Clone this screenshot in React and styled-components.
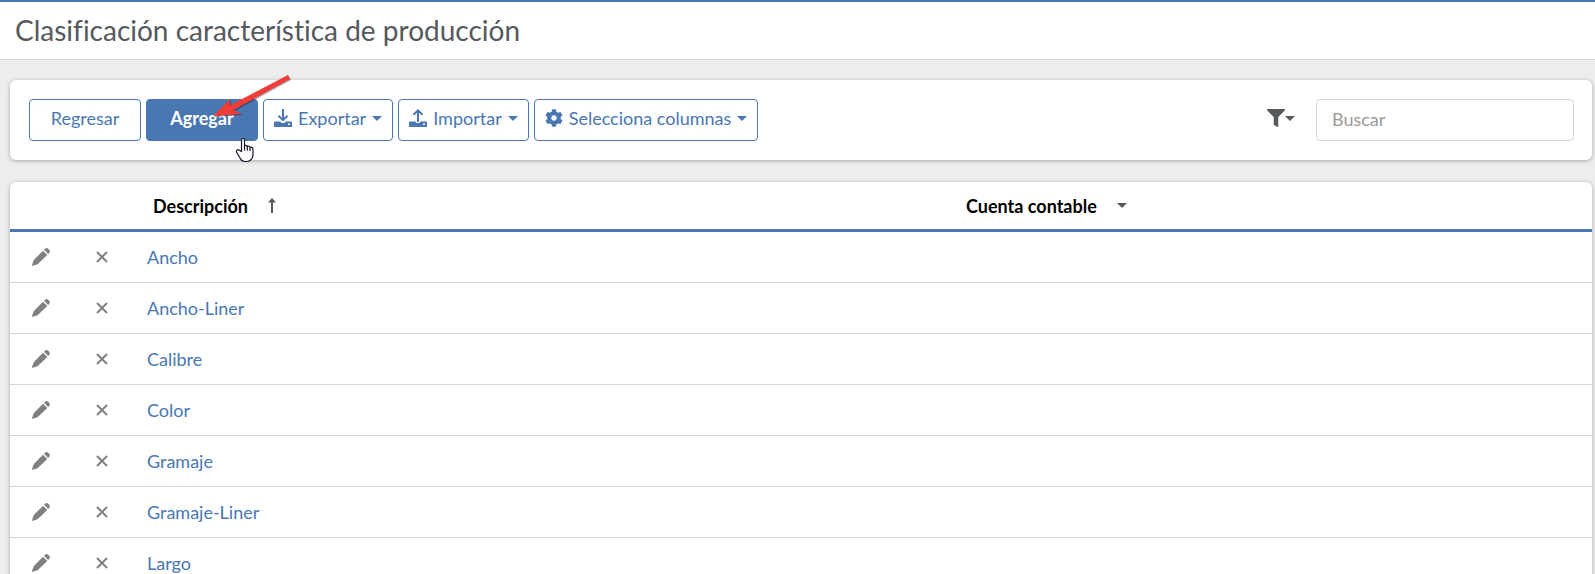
import React from 'react'
import styled, { createGlobalStyle } from 'styled-components'
import { FaCog, FaFilter } from 'react-icons/fa'

const GlobalStyle = createGlobalStyle`
* {
  box-sizing: border-box;
}
body {
  margin: 0;
  background: #ededed;
  font-family: "Trebuchet MS", Lato, "Open Sans", sans-serif;
  font-size: 18px;
  font-variant-ligatures: none;
  color: #55595c;
}
button, input {
  font-family: inherit;
  font-size: 18px;
}
`

const Page = styled.div`
height: 100vh;
overflow: hidden;
`
const Header = styled.header`
background: #fff;
border-top: 2px solid #4877b1;
border-bottom: 1px solid #d6d6d6;
padding: 10px 15px 11px;
h1 {
  margin: 0;
  font-size: 28px;
  font-weight: 400;
  line-height: 36px;
}
`
const Card = styled.section`
margin: 20px 3px 22px 10px;
background: #fff;
border-radius: 6px;
box-shadow: 0 1px 4px rgba(0, 0, 0, 0.3);
`
const Toolbar = styled(Card)`
display: flex;
align-items: center;
justify-content: space-between;
padding: 19px 18px 19px 19px;
`
const Group = styled.div`
display: flex;
align-items: center;
gap: ${props => props.$gap || 5}px;
`
const Button = styled.button`
display: flex;
align-items: center;
justify-content: center;
gap: 6px;
min-width: 112px;
height: 42px;
padding: 0 10px 4px;
border: 1px solid #4877b1;
border-radius: 4px;
background: ${props => (props.$primary ? '#4877b1' : '#fff')};
color: ${props => (props.$primary ? '#fff' : '#4877b1')};
font-weight: ${props => (props.$primary ? 700 : 400)};
white-space: nowrap;
cursor: pointer;
`
const Caret = styled.span`
border: 5px solid transparent;
border-top-color: currentColor;
border-bottom: 0;
`
const Pointed = styled.div`
position: relative;
`
const ArrowSvg = styled.svg`
position: absolute;
left: 64px;
top: -26px;
pointer-events: none;
`
const HandSvg = styled.svg`
position: absolute;
left: 89px;
top: 38px;
pointer-events: none;
`
const FilterButton = styled.button`
display: flex;
align-items: center;
padding: 0 0 4px;
border: 0;
background: none;
color: #55595c;
cursor: pointer;
`
const Search = styled.input`
width: 258px;
height: 42px;
padding: 0 15px 2px;
border: 1px solid #d6d6d6;
border-radius: 4px;
outline: none;
&::placeholder {
  color: #999;
  opacity: 1;
}
`
const Table = styled.table`
width: 100%;
border-collapse: separate;
border-spacing: 0;
table-layout: fixed;
th {
  height: 50px;
  padding: 0 0 0 13px;
  border-bottom: 3px solid #4877b1;
  color: #000;
  text-align: left;
}
td {
  height: 51px;
  padding: 0 7px;
  border-bottom: 1px solid #d6d6d6;
}
`
const IconCol = styled.col`
width: ${props => props.$width}px;
`
const HeadLabel = styled.span`
display: flex;
align-items: center;
gap: 20px;
svg, i {
  color: #55595c;
}
`
const IconButton = styled.button`
display: flex;
justify-content: center;
width: 48px;
padding: 0;
border: 0;
background: none;
color: #808080;
cursor: pointer;
`
const RowLink = styled.a`
color: #4877b1;
text-decoration: none;
`

const rows = ['Ancho', 'Ancho-Liner', 'Calibre', 'Color', 'Gramaje', 'Gramaje-Liner', 'Largo']

const TrayIcon = ({ up }) => (
  <svg width="18" height="18" viewBox="0 0 18 18" fill="none" aria-hidden="true">
    <path
      d={up ? 'M9 13V2M4.5 5.8L9 1.4l4.500 4.400' : 'M9 0v10.500M4.500 6.800L9 11.200l4.500-4.400'}
      stroke="currentColor"
      strokeWidth="2"
    />
    <path
      d="M1 12.500h5.300l1.200 1.600h3l1.200-1.600H17a1 1 0 0 1 1 1V18H0v-4.500a1 1 0 0 1 1-1zM14 14.500v1.500h2v-1.500z"
      fill="currentColor"
      fillRule="evenodd"
    />
  </svg>
)

const PencilIcon = () => (
  <svg width="18" height="18" viewBox="0 0 18 18" fill="currentColor" aria-hidden="true">
    <path d="M11 2.700l4.300 4.300L6.400 15.500C4.600 16.800 2 17.600 0 18c.3-2.200 1-4.500 2.300-6.500z" />
    <path d="M12 1.800l1-1c1-1 2.300-1 3.200-.1l1 1c.9.900.9 2.200 0 3.200l-1 1z" />
  </svg>
)

const CrossIcon = () => (
  <svg width="12" height="12" viewBox="0 0 12 12" fill="none" stroke="currentColor" strokeWidth="2" aria-hidden="true">
    <path d="M1 1l10 10M11 1L1 11" />
  </svg>
)

const SortIcon = () => (
  <svg width="8" height="15" viewBox="0 0 8 15" fill="currentColor" aria-hidden="true">
    <path d="M4 0l4 4.500H5V15H3V4.500H0z" />
  </svg>
)

const RedArrow = () => (
  <ArrowSvg width="82" height="50" viewBox="0 0 82 50" aria-hidden="true">
    <path d="M3 43L20 26l-.5 6.500L78 2l2 4-56.500 31 8 4z" transform="translate(1 1)" fill="#000" opacity="0.35" />
    <path d="M3 43L20 26l-.5 6.500L78 2l2 4-56.500 31 8 4z" fill="#f23c38" />
  </ArrowSvg>
)

const Hand = () => (
  <HandSvg width="20" height="26" viewBox="0 0 20 26" aria-hidden="true">
    <path
      d="M6.500 14.500V3c0-2 3-2 3 0v6c.5-1 2.700-.8 2.800.7.600-.9 2.500-.6 2.700.8.800-.7 3-.3 3 1.500v5.500c0 3-2 7-6 7h-2c-3 0-4.500-2-5.500-4.500l-3-5c-.6-2 1.500-3 2.800-1.700z"
      fill="#fff"
      stroke="#15152a"
      strokeWidth="1.200"
      strokeLinejoin="round"
    />
    <path d="M9.500 8.500v5M12.300 9.700v4M15 10.500v3.500" stroke="#15152a" strokeWidth="1.200" />
  </HandSvg>
)

const App = () => {
  return (
    <Page>
      <GlobalStyle />
      <Header>
        <h1>Clasificación característica de producción</h1>
      </Header>
      <Toolbar>
        <Group>
          <Button>Regresar</Button>
          <Pointed>
            <Button $primary>Agregar</Button>
            <RedArrow />
            <Hand />
          </Pointed>
          <Button><TrayIcon />Exportar<Caret /></Button>
          <Button><TrayIcon up />Importar<Caret /></Button>
          <Button><FaCog />Selecciona columnas<Caret /></Button>
        </Group>
        <Group $gap={21}>
          <FilterButton aria-label="Filtrar">
            <FaFilter />
            <Caret />
          </FilterButton>
          <Search type="text" placeholder="Buscar" aria-label="Buscar" />
        </Group>
      </Toolbar>
      <Card>
        <Table>
          <colgroup>
            <IconCol $width={61} />
            <IconCol $width={69} />
            <col />
            <IconCol $width={639} />
          </colgroup>
          <thead>
            <tr>
              <th />
              <th />
              <th><HeadLabel>Descripción<SortIcon /></HeadLabel></th>
              <th><HeadLabel>Cuenta contable<Caret as="i" /></HeadLabel></th>
            </tr>
          </thead>
          <tbody>
            {rows.map(row => <tr key={row}>
              <td><IconButton aria-label="Editar"><PencilIcon /></IconButton></td>
              <td><IconButton aria-label="Eliminar"><CrossIcon /></IconButton></td>
              <td><RowLink href="#">{row}</RowLink></td>
              <td />
            </tr>)}
          </tbody>
        </Table>
      </Card>
    </Page>
  )
}

export default App
